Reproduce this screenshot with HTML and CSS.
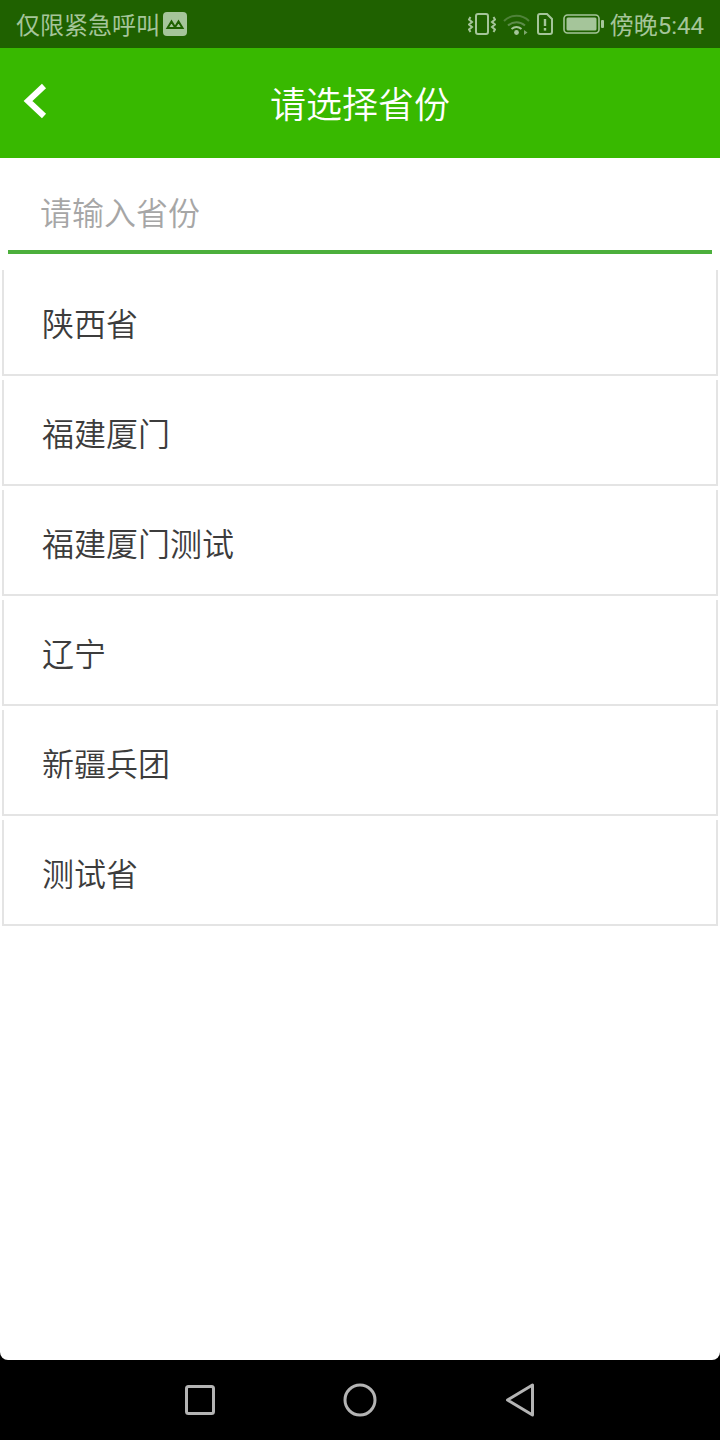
FILE: index.html
```html
<!DOCTYPE html>
<html lang="zh-CN">
<head>
    <meta charset="UTF-8">
    <meta name="viewport" content="width=device-width, initial-scale=1.0">
    <title>请选择省份</title>
    <link rel="stylesheet" href="styles.css">
</head>
<body>
    <div class="phone">
        <!-- Status bar -->
        <div class="status-bar">
            <div class="status-left">
                <span class="status-text">仅限紧急呼叫</span>
                <svg class="carrier-icon" width="24" height="24" viewBox="0 0 24 24">
                    <rect width="24" height="24" rx="4" fill="#a5c59a"/>
                    <path d="M4.5 16 L8.5 9.5 L12.5 16 Z M11.5 16 L15.5 9.5 L19.5 16 Z" fill="none" stroke="#1f6100" stroke-width="2"/>
                </svg>
            </div>
            <div class="status-right">
                <svg class="vibrate-icon" width="28" height="24" viewBox="0 0 28 24" fill="none" stroke="#a5c59a" stroke-width="2">
                    <rect x="8" y="2" width="12" height="20" rx="2"/>
                    <path d="M2.5 5 L1 7.5 L4 10 L1 12.5 L4 15 L1 17.5 L2.5 20 M25.5 5 L27 7.5 L24 10 L27 12.5 L24 15 L27 17.5 L25.5 20" stroke-width="2"/>
                </svg>
                <svg class="wifi-icon" width="27" height="24" viewBox="0 0 27 24" fill="none" stroke="#4f8239" stroke-width="2">
                    <path d="M1 9 C8 2 19 2 26 9"/>
                    <path d="M5 13.5 C10 9 17 9 22 13.5" stroke="#5d8c4b"/>
                    <path d="M8.5 17 C11.5 14.5 15.5 14.5 18.5 17" stroke="#a5c59a"/>
                    <circle cx="13.5" cy="20.5" r="2.4" fill="#a5c59a" stroke="none"/>
                    <path d="M21 18 V23 L24.5 20.5 Z" fill="#7da56d" stroke="none"/>
                </svg>
                <svg class="sim-icon" width="16" height="24" viewBox="0 0 16 24" fill="none">
                    <path d="M1 4 A2 2 0 0 1 3 2 H10 L15 7 V20 A2 2 0 0 1 13 22 H3 A2 2 0 0 1 1 20 Z" stroke="#a5c59a" stroke-width="2"/>
                    <rect x="6.8" y="7" width="2.4" height="7" fill="#a5c59a"/>
                    <rect x="6.8" y="16" width="2.4" height="2.6" fill="#a5c59a"/>
                </svg>
                <svg class="battery-icon" width="41" height="22" viewBox="0 0 41 22" fill="none">
                    <rect x="1" y="2" width="35" height="18" rx="3.5" stroke="#a5c59a" stroke-width="1.6"/>
                    <rect x="3.5" y="4.5" width="30" height="13" rx="1.5" fill="#a5c59a"/>
                    <rect x="38" y="7" width="3" height="8" rx="1" fill="#a5c59a"/>
                </svg>
                <span class="status-text clock">傍晚5:44</span>
            </div>
        </div>

        <!-- Title bar -->
        <header class="title-bar">
            <svg class="back-icon" width="24" height="36" viewBox="0 0 24 36" fill="none" stroke="#fff" stroke-width="6">
                <path d="M21 3 L5 18 L21 33"/>
            </svg>
            <h1>请选择省份</h1>
        </header>

        <main class="content">
            <div class="search-box">
                <input type="text" class="search-input" placeholder="请输入省份">
            </div>
            <ul class="province-list">
                <li>陕西省</li>
                <li>福建厦门</li>
                <li>福建厦门测试</li>
                <li>辽宁</li>
                <li>新疆兵团</li>
                <li>测试省</li>
            </ul>
        </main>

        <!-- Navigation bar -->
        <nav class="nav-bar">
            <svg width="30" height="30" viewBox="0 0 30 30" fill="none" stroke="#b4b4b4" stroke-width="3">
                <rect x="1.5" y="1.5" width="27" height="27" rx="2"/>
            </svg>
            <svg width="34" height="34" viewBox="0 0 34 34" fill="none" stroke="#b4b4b4" stroke-width="3">
                <circle cx="17" cy="17" r="15"/>
            </svg>
            <svg width="30" height="34" viewBox="0 0 30 34" fill="none" stroke="#b4b4b4" stroke-width="3" stroke-linejoin="round">
                <path d="M27.5 2 V32 L2.5 17 Z"/>
            </svg>
        </nav>
    </div>
</body>
</html>
```
FILE: styles.css
```css
* {
    margin: 0;
    padding: 0;
    box-sizing: border-box;
}

body {
    font-family: "Noto Sans CJK SC", "Liberation Sans", sans-serif;
    background-color: #000;
    color: #333;
}

.phone {
    display: flex;
    flex-direction: column;
    height: 1440px;
}

/* Status bar */
.status-bar {
    display: flex;
    justify-content: space-between;
    align-items: center;
    height: 48px;
    padding: 0 16px;
    background-color: #1f6100;
    color: #a5c59a;
    font-size: 24px;
    font-family: Roboto, "Noto Sans CJK SC", sans-serif;
}

.status-left,
.status-right {
    display: flex;
    align-items: center;
}

.status-text {
    position: relative;
    top: -1px;
}

.carrier-icon {
    margin-left: 3px;
}

.vibrate-icon,
.wifi-icon {
    margin-right: 7px;
}

.sim-icon {
    margin-right: 10px;
}

.battery-icon {
    margin-right: 6px;
}

.clock {
    white-space: nowrap;
}

/* Title bar */
.title-bar {
    position: relative;
    display: flex;
    justify-content: center;
    align-items: center;
    height: 110px;
    padding-bottom: 2px;
    background-color: #38b900;
    color: #fff;
}

.title-bar h1 {
    font-size: 36px;
    font-weight: 350;
}

.back-icon {
    position: absolute;
    left: 23px;
    top: 35px;
}

/* List area */
.content {
    flex: 1;
    background-color: #fff;
    border-radius: 0 0 8px 8px;
}

.search-box {
    margin: 0 8px 16px;
    height: 96px;
    padding: 14px 32px 0;
    display: flex;
    align-items: center;
    border-bottom: 4px solid #4caf3c;
}

.search-input {
    width: 100%;
    border: none;
    outline: none;
    font-family: inherit;
    font-size: 32px;
    font-weight: 350;
    color: #333;
}

.search-input::placeholder {
    color: #a6a6a6;
}

.province-list {
    list-style: none;
    padding: 0 2px;
}

.province-list li {
    height: 106px;
    margin-bottom: 4px;
    padding-left: 38px;
    display: flex;
    align-items: center;
    font-size: 32px;
    font-weight: 350;
    color: #3c3c3c;
    border: 2px solid #e4e4e4;
    border-top: none;
}

/* Navigation bar */
.nav-bar {
    display: flex;
    align-items: center;
    justify-content: center;
    gap: 128px;
    height: 80px;
    background-color: #000;
}
```
